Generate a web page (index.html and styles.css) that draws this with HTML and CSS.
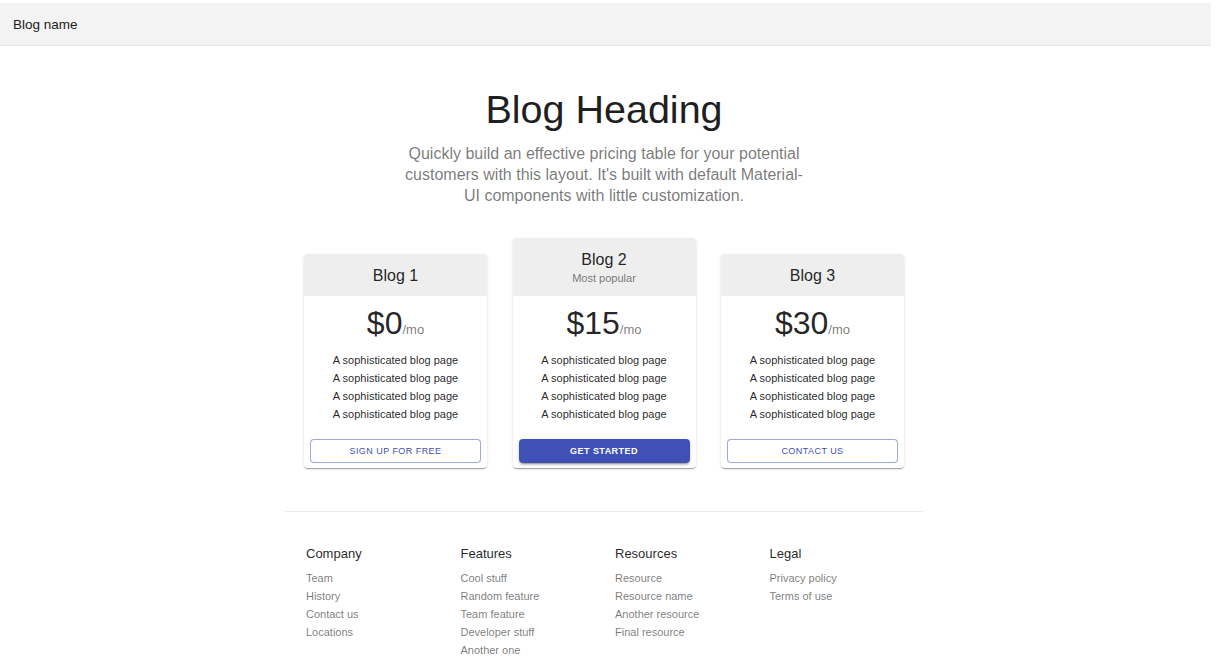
FILE: index.html
```html
<!DOCTYPE html>
<html lang="en">
<head>
<meta charset="utf-8">
<title>Pricing</title>
<link rel="stylesheet" href="styles.css">
</head>
<body>
<div class="page">
  <header class="appbar">
    <span class="brand">Blog name</span>
  </header>
  <div class="content">
    <section class="hero">
      <h1 class="hero-title">Blog Heading</h1>
      <p class="hero-sub">Quickly build an effective pricing table for your potential customers with this layout. It's built with default Material-UI components with little customization.</p>
    </section>

    <section class="pricing">
      <div class="card">
        <div class="card-head">
          <div class="card-title">Blog 1</div>
        </div>
        <div class="card-body">
          <div class="price"><span class="amount">$0</span><span class="per">/mo</span></div>
          <ul class="features">
            <li>A sophisticated blog page</li>
            <li>A sophisticated blog page</li>
            <li>A sophisticated blog page</li>
            <li>A sophisticated blog page</li>
          </ul>
          <button class="btn btn-outlined" type="button">Sign up for free</button>
        </div>
      </div>

      <div class="card">
        <div class="card-head">
          <div class="card-title">Blog 2</div>
          <div class="card-sub">Most popular</div>
        </div>
        <div class="card-body">
          <div class="price"><span class="amount">$15</span><span class="per">/mo</span></div>
          <ul class="features">
            <li>A sophisticated blog page</li>
            <li>A sophisticated blog page</li>
            <li>A sophisticated blog page</li>
            <li>A sophisticated blog page</li>
          </ul>
          <button class="btn btn-contained" type="button">Get started</button>
        </div>
      </div>

      <div class="card">
        <div class="card-head">
          <div class="card-title">Blog 3</div>
        </div>
        <div class="card-body">
          <div class="price"><span class="amount">$30</span><span class="per">/mo</span></div>
          <ul class="features">
            <li>A sophisticated blog page</li>
            <li>A sophisticated blog page</li>
            <li>A sophisticated blog page</li>
            <li>A sophisticated blog page</li>
          </ul>
          <button class="btn btn-outlined" type="button">Contact us</button>
        </div>
      </div>
    </section>

    <footer class="footer">
      <div class="footer-col">
        <h6 class="footer-title">Company</h6>
        <ul class="footer-links">
          <li>Team</li>
          <li>History</li>
          <li>Contact us</li>
          <li>Locations</li>
        </ul>
      </div>
      <div class="footer-col">
        <h6 class="footer-title">Features</h6>
        <ul class="footer-links">
          <li>Cool stuff</li>
          <li>Random feature</li>
          <li>Team feature</li>
          <li>Developer stuff</li>
          <li>Another one</li>
        </ul>
      </div>
      <div class="footer-col">
        <h6 class="footer-title">Resources</h6>
        <ul class="footer-links">
          <li>Resource</li>
          <li>Resource name</li>
          <li>Another resource</li>
          <li>Final resource</li>
        </ul>
      </div>
      <div class="footer-col">
        <h6 class="footer-title">Legal</h6>
        <ul class="footer-links">
          <li>Privacy policy</li>
          <li>Terms of use</li>
        </ul>
      </div>
    </footer>
  </div>
</div>
</body>
</html>
```

FILE: styles.css
```css
html, body {
  margin: 0;
  padding: 0;
  background: #ffffff;
}

body {
  font-family: "Liberation Sans", Arial, sans-serif;
  color: rgba(0, 0, 0, 0.87);
}

.page {
  width: 1211px;
  padding-top: 3px;
}

.appbar {
  height: 42px;
  background: #f3f3f3;
  border-bottom: 1px solid #e2e2e2;
  display: flex;
  align-items: center;
  padding-left: 13px;
}

.brand {
  font-size: 13.5px;
  color: #1c1c1c;
}

.content {
  width: 1208px;
}

.hero {
  padding-top: 40px;
  text-align: center;
}

.hero-title {
  margin: 0;
  font-size: 39.5px;
  font-weight: 400;
  line-height: 46px;
  color: #1f1f1f;
}

.hero-sub {
  margin: 11px auto 0;
  width: 405px;
  font-size: 16px;
  line-height: 21px;
  color: rgba(0, 0, 0, 0.54);
}

.pricing {
  display: flex;
  align-items: flex-end;
  justify-content: center;
  gap: 25.5px;
  margin-top: 32px;
}

.card {
  width: 183px;
  background: #ffffff;
  border-radius: 4px;
  overflow: hidden;
  box-shadow: 0 2px 1px -1px rgba(0, 0, 0, 0.2), 0 1px 1px 0 rgba(0, 0, 0, 0.14), 0 1px 3px 0 rgba(0, 0, 0, 0.12);
}

.card-head {
  background: #eeeeee;
  padding: 13px 8px 11px;
  text-align: center;
}

.card-title {
  font-size: 16px;
  line-height: 18px;
}

.card-sub {
  margin-top: 2px;
  font-size: 11px;
  line-height: 14px;
  color: rgba(0, 0, 0, 0.54);
}

.card-body {
  padding: 8px 6px 5px;
}

.price {
  text-align: center;
  font-size: 32px;
  line-height: 38px;
  height: 38px;
}

.amount {
  font-size: 32px;
}

.per {
  font-size: 13px;
  line-height: 1;
  color: rgba(0, 0, 0, 0.54);
}

.features {
  list-style: none;
  margin: 9px 0 0;
  padding: 0;
  text-align: center;
  font-size: 11px;
  line-height: 18px;
  color: rgba(0, 0, 0, 0.87);
}

.btn {
  display: block;
  box-sizing: border-box;
  width: 100%;
  height: 24px;
  margin-top: 16px;
  padding: 0;
  border-radius: 4px;
  font-family: inherit;
  font-size: 9px;
  letter-spacing: 0.45px;
  text-transform: uppercase;
  cursor: pointer;
}

.btn-outlined {
  background: #ffffff;
  border: 1px solid rgba(63, 81, 181, 0.5);
  color: #3f51b5;
}

.btn-contained {
  background: #3f51b5;
  border: none;
  color: #ffffff;
  font-weight: 700;
  box-shadow: 0 3px 1px -2px rgba(0, 0, 0, 0.2), 0 2px 2px 0 rgba(0, 0, 0, 0.14), 0 1px 5px 0 rgba(0, 0, 0, 0.12);
}

.footer {
  box-sizing: border-box;
  width: 640px;
  margin: 43px auto 0;
  border-top: 1px solid #eaeaea;
  padding: 33px 0 40px 22px;
  display: grid;
  grid-template-columns: repeat(4, 154.5px);
}

.footer-title {
  margin: 0 0 6px;
  font-size: 13px;
  font-weight: 400;
  line-height: 18px;
  color: rgba(0, 0, 0, 0.87);
}

.footer-links {
  list-style: none;
  margin: 0;
  padding: 0;
  font-size: 11px;
  line-height: 18px;
  color: rgba(0, 0, 0, 0.54);
}
```
